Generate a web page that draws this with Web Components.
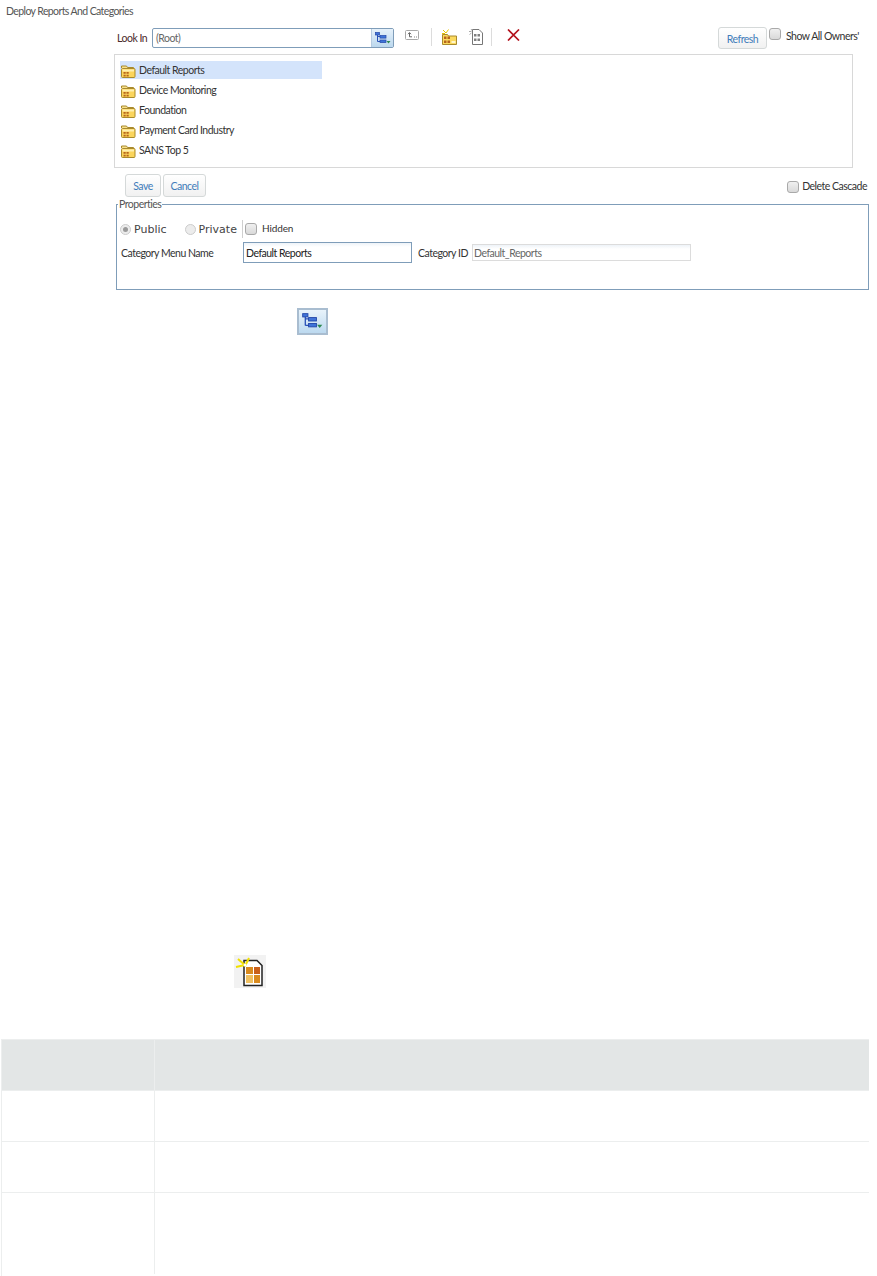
<!DOCTYPE html>
<html>
<head>
<meta charset="utf-8">
<title>Deploy Reports And Categories</title>
<style>
  html, body { margin: 0; background: #fff; }
  body { font-family: Lato, "Liberation Sans", sans-serif; font-size: 10.5px; letter-spacing: -0.5px; color: #333; white-space: nowrap; }
</style>
</head>
<body>
<doc-page>
  <deploy-panel>
    <tree-row selected>Default Reports</tree-row>
    <tree-row>Device Monitoring</tree-row>
    <tree-row>Foundation</tree-row>
    <tree-row>Payment Card Industry</tree-row>
    <tree-row>SANS Top 5</tree-row>
  </deploy-panel>
  <tree-shot></tree-shot>
  <report-shot></report-shot>
  <doc-table>
    <doc-row head></doc-row>
    <doc-row></doc-row>
    <doc-row></doc-row>
    <doc-row last></doc-row>
  </doc-table>
</doc-page>

<script>
(function() {
  const treeIcon = (w, h) => `<svg width="${w}" height="${h}" viewBox="0 0 16 13">
      <path d="M2.500 1.500v8M2.500 4.500h3M2.500 9.500h3" stroke="#2a52b8" fill="none"/>
      <rect x="0.500" y="0.500" width="4" height="2.500" fill="#3f74d8" stroke="#2347a8" stroke-width="0.700"/>
      <rect x="5" y="3.500" width="6" height="2.600" fill="#3f74d8" stroke="#2347a8" stroke-width="0.700"/>
      <rect x="5" y="8" width="6" height="2.600" fill="#3f74d8" stroke="#2347a8" stroke-width="0.700"/>
      <path d="M11.500 9h4l-2 2.400z" fill="#2f8a52"/>
    </svg>`;

  const folderIcon = `<svg width="15" height="13" viewBox="0 0 15 13">
      <path d="M0.500 3V1h5l1 1.500h6v2" fill="#f6df8c" stroke="#a98a2c"/>
      <rect x="0.500" y="3.500" width="13.500" height="9" rx="1" fill="#fbd55c" stroke="#a98a2c"/>
      <rect x="1.500" y="4.500" width="11.500" height="2" fill="#fff0b0"/>
      <path d="M2.500 7h2.200v1.800H2.500zM5.500 7h2.200v1.800H5.500zM2.500 9.800h2.200v1.800H2.500zM5.500 9.800h2.200v1.800H5.500z" fill="#b5651d"/>
    </svg>`;

  const upIcon = `<svg width="14" height="10" viewBox="0 0 14 10">
      <rect x="0.500" y="0.500" width="13" height="9" rx="1" fill="#fff" stroke="#a8a8a8"/>
      <path d="M3 4.200l1.500-1.600L6 4.200M4.500 2.800v4h2.500" fill="none" stroke="#666"/>
      <path d="M9 7h1M11 7h1" stroke="#888"/>
    </svg>`;

  const newFolderIcon = `<svg width="15" height="16" viewBox="0 0 15 16">
      <path d="M0.500 5.500h5l1 1.500h8v8.500H0.500z" fill="#fbd95e" stroke="#a98a2c"/>
      <path d="M1 1l3 3M6.500 0.500L4 4M0 4.500h3" stroke="#e8c600" fill="none"/>
      <path d="M2 7.500h2.500v2.500H2zM5.500 7.500H8v2.500H5.500zM2 11.500h2.500V14H2zM5.500 11.500H8V14H5.500z" fill="#b5651d"/>
      <rect x="9.500" y="12" width="4" height="2" fill="#fff6c8"/>
    </svg>`;

  const newReportIcon = `<svg width="14" height="16" viewBox="0 0 14 16">
      <path d="M0 2.500h2.500M2 0l1.500 2M0.500 5.500l2-1.500" stroke="#aaa" fill="none"/>
      <path d="M3.500 0.500h6.500l3.500 3.500v11.500h-10z" fill="#fff" stroke="#777"/>
      <path d="M5 5h2.500v2.500H5zM8.500 5H11v2.500H8.500zM5 9.500h2.500V12H5zM8.500 9.500H11V12H8.500z" fill="#808080"/>
    </svg>`;

  const deleteIcon = `<svg width="13" height="12" viewBox="0 0 13 12">
      <path d="M1 0.500l11 11M12 0.500l-11 11" stroke="#b3121d" stroke-width="1.700" fill="none"/>
    </svg>`;

  class DocPage extends HTMLElement {
    connectedCallback() {
      this.attachShadow({mode: 'open'}).innerHTML =
        `<style>
          :host { display: block; height: 1276px; overflow: hidden; }
        </style>
        <slot></slot>`;
    }
  }

  class DeployPanel extends HTMLElement {
    connectedCallback() {
      this.attachShadow({mode: 'open'}).innerHTML =
        `<style>
          :host { display: block; color: #333; }
          h1 { font: inherit; letter-spacing: -0.6px; color: #555; margin: 0; padding: 5px 0 0 6px; height: 22px; box-sizing: border-box; line-height: 13px; }
          .body { margin-left: 113px; }
          .look { display: flex; align-items: flex-start; height: 32px; padding: 6px 0 0 4px; box-sizing: border-box; }
          .look > label { width: 35px; color: #4a2a2a; line-height: 20px; }
          .combo { display: flex; width: 242px; height: 20px; box-sizing: border-box; border: 1px solid #7f9db9; border-radius: 2px; }
          .combo span { flex: 1; padding-left: 3px; line-height: 18px; color: #666; }
          .combo b { width: 21px; display: flex; align-items: center; justify-content: center; background: linear-gradient(#e6f1fa, #bcd8ee); border-left: 1px solid #b6cbe0; }
          .tool { display: flex; }
          .sep { width: 1px; height: 18px; background: #dcdcdc; }
          .right { margin-left: auto; display: flex; align-items: flex-start; padding-right: 20px; margin-top: -1px; }
          .right x-button { width: 49px; height: 22px; }
          .right span { width: 71px; margin-left: 5px; line-height: 13px; color: #333; padding-top: 3px; }
          .tree { margin: 0 0 0 1px; width: 739px; height: 114px; box-sizing: border-box; border: 1px solid #d8d8d8; padding: 6px 0 0 5px; }
          .tree ::slotted(tree-row) { margin-bottom: 2px; }
          .actions { display: flex; align-items: flex-start; padding: 6px 10px 0 12px; height: 30px; box-sizing: border-box; }
          .actions x-check { margin: 7px 0 0 auto; }
          .actions span { margin: 6px 0 0 3px; line-height: 13px; }
          fieldset { margin: 0 0 0 3px; padding: 0; width: 753px; height: 92px; box-sizing: border-box; border: 1px solid #7f9db9; min-width: 0; }
          legend { margin-left: 1px; padding: 0 1px; line-height: 12px; color: #555; }
          .radios { display: flex; align-items: center; height: 18px; margin: 10px 0 0 3px; font: 11px "DejaVu Sans", sans-serif; letter-spacing: 0; color: #444; }
          .radios i { box-sizing: border-box; width: 11px; height: 11px; border-radius: 50%; border: 1px solid #ccc; background: #ececec; margin-right: 3px; display: flex; align-items: center; justify-content: center; }
          .radios i.on::after { content: ''; width: 5px; height: 5px; border-radius: 50%; background: #9a9a9a; }
          .radios .pv { margin-left: 18px; }
          .radios .bar { width: 1px; height: 18px; background: #cfcfcf; margin: 0 2px 0 5px; }
          .radios small { font: 10px Lato, "Liberation Sans", sans-serif; letter-spacing: -0.1px; color: #333; margin-left: 5px; padding-bottom: 3px; }
          .fields { display: flex; align-items: center; height: 21px; margin-top: 4px; padding-left: 4px; }
          .fields label { display: block; }
          .name { width: 122px; }
          .val { box-sizing: border-box; height: 21px; width: 169px; border: 1px solid #7f9db9; padding-left: 2px; line-height: 20px; color: #222; background: linear-gradient(#eef3f8, #fff 4px); }
          .idl { margin-left: 6px; width: 54px; }
          .val2 { box-sizing: border-box; height: 17px; width: 219px; border: 1px solid #dcdcdc; padding-left: 1px; line-height: 16px; color: #666; background: linear-gradient(#eef3f8, #fff 4px); }
        </style>
        <h1>Deploy Reports And Categories</h1>
        <div class="body">
          <div class="look">
            <label>Look In</label>
            <div class="combo"><span>(Root)</span><b>${treeIcon(16, 13)}</b></div>
            <div class="tool" style="margin:2px 0 0 11px">${upIcon}</div>
            <div class="sep" style="margin-left:12px"></div>
            <div class="tool" style="margin:1px 0 0 10px">${newFolderIcon}</div>
            <div class="tool" style="margin:1px 0 0 12px">${newReportIcon}</div>
            <div class="sep" style="margin-left:8px"></div>
            <div class="tool" style="margin:1px 0 0 15px">${deleteIcon}</div>
            <div class="right">
              <x-button>Refresh</x-button>
              <x-check style="margin:1px 0 0 2px"></x-check>
              <span>Show All Owners'</span>
            </div>
          </div>
          <div class="tree"><slot></slot></div>
          <div class="actions">
            <x-button style="width:36px">Save</x-button>
            <x-button style="width:43px;margin-left:2px">Cancel</x-button>
            <x-check></x-check>
            <span>Delete Cascade</span>
          </div>
          <fieldset>
            <legend>Properties</legend>
            <div class="radios">
              <i class="on"></i>Public
              <i class="pv"></i>Private
              <div class="bar"></div>
              <x-check></x-check>
              <small>Hidden</small>
            </div>
            <div class="fields">
              <label class="name">Category Menu Name</label>
              <div class="val">Default Reports</div>
              <label class="idl">Category ID</label>
              <div class="val2">Default_Reports</div>
            </div>
          </fieldset>
        </div>`;
    }
  }

  class TreeRow extends HTMLElement {
    connectedCallback() {
      this.attachShadow({mode: 'open'}).innerHTML =
        `<style>
          :host { display: flex; align-items: center; width: 202px; height: 18px; color: #333; }
          :host([selected]) { background: #d4e4fb; }
          svg { margin: 2px 3px 0 1px; }
        </style>
        ${folderIcon}<slot></slot>`;
    }
  }

  class XButton extends HTMLElement {
    connectedCallback() {
      this.attachShadow({mode: 'open'}).innerHTML =
        `<style>
          :host { display: block; box-sizing: border-box; height: 23px; text-align: center; line-height: 22px; color: #3f7cba; border: 1px solid #d5d9d9; border-radius: 3px; background: linear-gradient(#fff, #f1f1f1); }
        </style>
        <slot></slot>`;
    }
  }

  class XCheck extends HTMLElement {
    connectedCallback() {
      this.attachShadow({mode: 'open'}).innerHTML =
        `<style>
          :host { display: block; box-sizing: border-box; width: 12px; height: 12px; border: 1px solid #a9a9a9; border-radius: 3px; background: linear-gradient(#f0f0f0, #d9d9d9); }
        </style>`;
    }
  }

  class TreeShot extends HTMLElement {
    connectedCallback() {
      this.attachShadow({mode: 'open'}).innerHTML =
        `<style>
          :host { display: flex; align-items: center; justify-content: center; box-sizing: border-box; width: 31px; height: 27px; margin: 18px 0 0 297px; border: 2px solid #a9bdd0; background: linear-gradient(#e8f3fb, #bcd9ef); }
        </style>
        ${treeIcon(21, 17)}`;
    }
  }

  class ReportShot extends HTMLElement {
    connectedCallback() {
      this.attachShadow({mode: 'open'}).innerHTML =
        `<style>
          :host { display: flex; align-items: center; justify-content: center; box-sizing: border-box; width: 32px; height: 33px; margin: 620px 0 0 234px; background: #f2f2f2; }
        </style>
        <svg width="30" height="31" viewBox="0 0 30 31">
          <path d="M9 4.500h13l5 5v20H9z" fill="#fff" stroke="#222" stroke-width="1.500"/>
          <rect x="11" y="11" width="7" height="7" fill="#d98a1e"/>
          <rect x="19" y="11" width="6" height="7" fill="#c9601a"/>
          <rect x="11" y="19" width="7" height="8" fill="#f0c060"/>
          <rect x="19" y="19" width="6" height="8" fill="#d98a1e"/>
          <path d="M3 3l8 7M14 2l-4 8M1 11l9-2" stroke="#f2e000" stroke-width="2" fill="none"/>
          <circle cx="10" cy="9" r="1.500" fill="#fff"/>
        </svg>`;
    }
  }

  class DocTable extends HTMLElement {
    connectedCallback() {
      this.attachShadow({mode: 'open'}).innerHTML =
        `<style>
          :host { display: block; margin: 51px 0 0 1px; width: 868px; border-left: 1px solid #eceeee; border-top: 1px solid #eceeee; box-sizing: border-box; }
        </style>
        <slot></slot>`;
    }
  }

  class DocRow extends HTMLElement {
    connectedCallback() {
      this.attachShadow({mode: 'open'}).innerHTML =
        `<style>
          :host { display: grid; grid-template-columns: 153px 1fr; height: 51px; box-sizing: border-box; border-bottom: 1px solid #eceeee; }
          :host([head]) { background: #e3e6e6; }
          :host([last]) { height: 86px; border-bottom: 0; }
          :host([last]) .a { height: 81px; }
          .a { border-right: 1px solid #eceeee; }
        </style>
        <div class="a"></div><div></div>`;
    }
  }

  customElements.define('doc-page', DocPage);
  customElements.define('deploy-panel', DeployPanel);
  customElements.define('tree-row', TreeRow);
  customElements.define('x-button', XButton);
  customElements.define('x-check', XCheck);
  customElements.define('tree-shot', TreeShot);
  customElements.define('report-shot', ReportShot);
  customElements.define('doc-table', DocTable);
  customElements.define('doc-row', DocRow);
}());
</script>
</body>
</html>
